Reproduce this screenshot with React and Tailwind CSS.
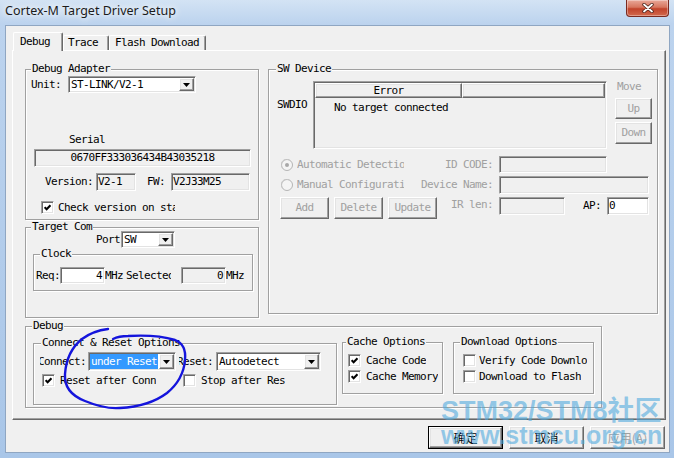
import React from 'react';

// classic 3D edges used by the dialog controls
const sunken =
  'border border-t-[#a0a0a0] border-l-[#a0a0a0] border-r-white border-b-white shadow-[inset_1px_1px_0_#696969,inset_-1px_-1px_0_#e3e3e3]';
const raised =
  'border border-t-white border-l-white border-r-[#696969] border-b-[#696969] shadow-[inset_-1px_-1px_0_#a0a0a0,inset_1px_1px_0_#e3e3e3]';

function Group({ title, className = '', labelClass = 'ml-[5px]', children }) {
  return (
    <div className={`border border-[#a0a0a0] shadow-[1px_1px_0_#fff,inset_1px_1px_0_#fff] ${className}`}>
      <div className={`-mt-[7px] w-fit whitespace-nowrap bg-[#f0f0f0] px-[1px] leading-[12px] ${labelClass}`}>{title}</div>
      {children}
    </div>
  );
}

function Field({ value = '', className = '', align = 'left', white = false }) {
  return (
    <div
      className={`${sunken} flex items-center overflow-hidden whitespace-nowrap ${white ? 'bg-white' : 'bg-[#f0f0f0]'} ${
        align === 'right' ? 'justify-end pr-[2px]' : align === 'center' ? 'justify-center' : 'pl-[1px]'
      } ${className}`}
    >
      {value}
    </div>
  );
}

function DropBtn() {
  return (
    <div className={`${raised} flex w-[15px] shrink-0 items-center justify-center bg-[#f0f0f0]`}>
      <svg width="7" height="4" viewBox="0 0 7 4">
        <path d="M0 0h7L3.5 4z" fill="#000" />
      </svg>
    </div>
  );
}

function Combo({ value, className = '', selected = false }) {
  return (
    <div className={`${sunken} flex bg-white p-[1px] ${className}`}>
      <div
        className={`flex flex-1 items-center overflow-hidden whitespace-nowrap pl-[1px] ${
          selected ? 'mr-[1px] bg-[#3399ff] text-white' : ''
        }`}
      >
        {value}
      </div>
      <DropBtn />
    </div>
  );
}

function Check({ on }) {
  return (
    <div className={`${sunken} flex h-[13px] w-[13px] shrink-0 items-center justify-center bg-white`}>
      {on && (
        <svg width="7" height="7" viewBox="0 0 7 7">
          <path d="M0.6 3.2L2.6 5.2L6.5 1.2" fill="none" stroke="#000" strokeWidth="2.1" />
        </svg>
      )}
    </div>
  );
}

function Radio({ on }) {
  return (
    <svg width="12" height="12" viewBox="0 0 12 12" className="shrink-0">
      <circle cx="6" cy="6" r="5.5" fill="#f4f4f4" stroke="#b4b4b4" />
      <path d="M1.8 9.2A4.6 4.6 0 0 1 9.2 1.8" fill="none" stroke="#c8c8c8" />
      {on && <circle cx="6" cy="6" r="2" fill="#a8a8a8" />}
    </svg>
  );
}

function CheckRow({ on, label, textClass = '', gap = 'ml-[5px]' }) {
  return (
    <div className="flex items-center">
      <Check on={on} />
      <div className={`overflow-hidden whitespace-nowrap ${gap} ${textClass}`}>{label}</div>
    </div>
  );
}

function Btn({ children, className = '', disabled = false }) {
  return (
    <div
      className={`${raised} flex items-center justify-center bg-[#f0f0f0] ${disabled ? 'text-[#a0a0a0]' : ''} ${className}`}
    >
      {children}
    </div>
  );
}

function DialogBtn({ children, def = false, disabled = false }) {
  return (
    <div
      className={`flex h-[23px] w-[75px] items-center justify-center font-['Noto_Sans_CJK_SC',sans-serif] text-[12px] tracking-normal ${
        def ? 'border border-black' : ''
      }`}
    >
      <div
        className={`${raised} flex h-full w-full items-center justify-center bg-[#f0f0f0] ${
          disabled ? 'text-[#a0a0a0]' : 'text-black'
        }`}
      >
        {children}
      </div>
    </div>
  );
}

export default function App() {
  return (
    <div className="relative h-[458px] w-[674px] overflow-hidden bg-[linear-gradient(180deg,#d3e3f4_0px,#bcd3ee_24px,#a9c6e8_100%)] font-['DejaVu_Sans_Mono',monospace] text-[11px] leading-[12px] tracking-[-0.62px] text-black">
      {/* title bar */}
      <div className="flex h-[25px]">
        <div className="pl-[5px] pt-[3px] font-['Noto_Sans',sans-serif] text-[12.5px] leading-[16px] tracking-normal text-[#1b1b1b] [text-shadow:0_0_6px_#fff,0_0_10px_#fff]">
          Cortex-M Target Driver Setup
        </div>
        <div className="ml-auto mr-[5px] flex h-[17px] w-[43px] items-center justify-center rounded-b-[4px] border border-t-0 border-[#7a2a20] bg-[linear-gradient(180deg,#e9a899_0%,#d7765f_45%,#c1432b_55%,#d2694d_100%)] shadow-[inset_0_0_0_1px_rgba(255,255,255,0.35)]">
          <svg width="12" height="10" viewBox="0 0 12 10">
            <path d="M2 1.5l8 7M10 1.5l-8 7" stroke="#4a2018" strokeWidth="3.4" strokeLinecap="round" />
            <path d="M2 1.5l8 7M10 1.5l-8 7" stroke="#fff" strokeWidth="1.8" strokeLinecap="round" />
          </svg>
        </div>
      </div>

      {/* client area */}
      <div className="ml-[5px] h-[428px] w-[665px] border border-[#8fa6c2] bg-[#f0f0f0]">
        {/* tabs */}
        <div className="ml-[7px] mt-[6px] flex h-[18px] items-end">
          <div className="relative z-10 -mb-[1px] h-[19px] w-[50px] rounded-t-[2px] border-l border-r border-t border-l-white border-r-[#696969] border-t-white bg-[#f0f0f0] pl-[6px] pt-[3px] shadow-[inset_-1px_0_0_#a0a0a0]">
            Debug
          </div>
          <div className="h-[15px] w-[46px] rounded-t-[2px] border-l border-r border-t border-l-white border-r-[#696969] border-t-white pl-[4px] pt-[1px] shadow-[inset_-1px_0_0_#a0a0a0]">
            Trace
          </div>
          <div className="h-[15px] w-[97px] rounded-t-[2px] border-l border-r border-t border-l-white border-r-[#696969] border-t-white pl-[5px] pt-[1px] shadow-[inset_-1px_0_0_#a0a0a0]">
            Flash Download
          </div>
        </div>

        {/* tab page */}
        <div className="ml-[6px] h-[370px] w-[654px] border border-b-[#696969] border-l-white border-r-[#696969] border-t-white pl-[12px] pt-[18px] shadow-[inset_-1px_-1px_0_#a0a0a0]">
          <div className="flex gap-[9px]">
            {/* left column */}
            <div className="flex w-[234px] flex-col">
              <Group title="Debug Adapter" className="h-[151px]">
                <div className="mt-[1px] flex items-center pl-[5px]">
                  <span>Unit:</span>
                  <Combo value="ST-LINK/V2-1" className="ml-[7px] h-[17px] w-[128px]" />
                </div>
                <div className="mt-[41px] pl-[43px]">Serial</div>
                <Field value="0670FF333036434B43035218" align="center" className="ml-[8px] mt-[3px] h-[18px] w-[217px]" />
                <div className="mt-[6px] flex items-center pl-[19px]">
                  <span>Version:</span>
                  <Field value="V2-1" className="ml-[3px] h-[18px] w-[40px]" />
                  <span className="ml-[11px]">FW:</span>
                  <Field value="V2J33M25" className="ml-[6px] h-[18px] w-[79px]" />
                </div>
                <div className="mt-[10px] pl-[15px]">
                  <CheckRow on label="Check version on startup" gap="ml-[4px]" textClass="w-[117px]" />
                </div>
              </Group>

              <Group title="Target Com" className="mt-[7px] h-[91px]">
                <div className="-mt-[2px] flex items-center pl-[70px]">
                  <span>Port</span>
                  <Combo value="SW" className="ml-[1px] h-[17px] w-[54px]" />
                </div>
                <Group title="Clock" labelClass="ml-[6px]" className="ml-[7px] mt-[6px] h-[37px] w-[220px]">
                  <div className="mt-[7px] flex items-center pl-[2px]">
                    <span>Req:</span>
                    <Field value="4" align="right" white className="h-[17px] w-[45px]" />
                    <span>MHz</span>
                    <span className="ml-[3px] w-[45px] overflow-hidden whitespace-nowrap">Selected:</span>
                    <Field value="0" align="right" className="ml-[10px] h-[17px] w-[45px]" />
                    <span>MHz</span>
                  </div>
                </Group>
              </Group>
            </div>

            {/* SW device */}
            <Group title="SW Device" labelClass="ml-[7px]" className="h-[245px] w-[390px]">
              <div className="mt-[6px] flex items-start pl-[8px]">
                <div className="mt-[18px] w-[36px]">SWDIO</div>
                <div className={`${sunken} flex h-[68px] w-[294px] flex-col bg-[#f0f0f0] p-[1px]`}>
                  <div className="flex h-[15px]">
                    <div className={`${raised} flex w-[147px] items-center justify-center`}>Error</div>
                    <div className={`${raised} flex-1`} />
                  </div>
                  <div className="mt-[4px] pl-[19px]">No target connected</div>
                </div>
                <div className="ml-[8px] flex w-[37px] flex-col">
                  <div className="pl-[2px] text-[#a0a0a0]">Move</div>
                  <Btn disabled className="mt-[5px] h-[21px]">Up</Btn>
                  <Btn disabled className="mt-[3px] h-[22px]">Down</Btn>
                </div>
              </div>

              <div className="mt-[7px] flex h-[17px] items-center text-[#a0a0a0]">
                <div className="flex w-[224px] items-center pl-[12px]">
                  <Radio on />
                  <span className="ml-[4px] w-[107px] overflow-hidden whitespace-nowrap">Automatic Detection</span>
                  <span className="ml-auto">ID CODE:</span>
                </div>
                <Field className="ml-[6px] h-[17px] w-[108px]" />
              </div>
              <div className="mt-[3px] flex h-[18px] items-center text-[#a0a0a0]">
                <div className="flex w-[224px] items-center pl-[12px]">
                  <Radio />
                  <span className="ml-[4px] w-[107px] overflow-hidden whitespace-nowrap">Manual Configuration</span>
                  <span className="ml-auto">Device Name:</span>
                </div>
                <Field className="ml-[6px] h-[18px] w-[150px]" />
              </div>
              <div className="mt-[3px] flex items-start">
                <div className="flex w-[224px] items-center gap-[5px] pl-[11px] text-[#a0a0a0]">
                  <Btn disabled className="h-[22px] w-[49px]">Add</Btn>
                  <Btn disabled className="h-[22px] w-[49px]">Delete</Btn>
                  <Btn disabled className="h-[22px] w-[49px]">Update</Btn>
                  <span className="ml-auto self-start pt-[2px]">IR len:</span>
                </div>
                <Field className="ml-[6px] h-[18px] w-[66px]" />
                <span className="ml-[18px] pt-[3px]">AP:</span>
                <Field value="0" white className="ml-[6px] h-[18px] w-[42px]" />
              </div>
            </Group>
          </div>

          {/* debug options */}
          <Group title="Debug" labelClass="ml-[6px]" className="mt-[8px] h-[82px] w-[577px]">
            <div className="flex items-start pl-[7px]">
              <Group title="Connect & Reset Options" labelClass="ml-[7px]" className="mt-[11px] h-[62px] w-[304px]">
                <div className="mt-[3px] flex h-[19px] items-center">
                  <div className="ml-[6px] flex w-[46px] justify-end overflow-hidden whitespace-nowrap">
                    <span className="shrink-0">Connect:</span>
                  </div>
                  <Combo value="under Reset" selected className="ml-[2px] h-[19px] w-[88px]" />
                  <div className="ml-[3px] flex w-[34px] justify-end overflow-hidden whitespace-nowrap">
                    <span className="shrink-0">Reset:</span>
                  </div>
                  <Combo value="Autodetect" className="ml-[3px] h-[19px] w-[105px]" />
                </div>
                <div className="mt-[3px] flex items-center pl-[8px]">
                  <CheckRow on label="Reset after Connect" textClass="w-[96px]" />
                  <div className="ml-[27px]">
                    <CheckRow label="Stop after Reset" textClass="w-[84px]" />
                  </div>
                </div>
              </Group>

              <Group title="Cache Options" labelClass="ml-[3px]" className="ml-[5px] mt-[10px] h-[52px] w-[101px]">
                <div className="mt-[6px] flex flex-col gap-[3px] pl-[5px]">
                  <CheckRow on label="Cache Code" />
                  <CheckRow on label="Cache Memory" />
                </div>
              </Group>

              <Group title="Download Options" labelClass="ml-[6px]" className="ml-[10px] mt-[10px] h-[52px] w-[141px]">
                <div className="mt-[6px] flex flex-col gap-[3px] pl-[9px]">
                  <CheckRow label="Verify Code Download" gap="ml-[3px]" textClass="w-[108px]" />
                  <CheckRow label="Download to Flash" gap="ml-[3px]" />
                </div>
              </Group>
            </div>
          </Group>
        </div>

        {/* dialog buttons */}
        <div className="mt-[6px] flex justify-end gap-[6px] pr-[4px]">
          <DialogBtn def>确定</DialogBtn>
          <DialogBtn>取消</DialogBtn>
          <DialogBtn disabled>应用(A)</DialogBtn>
        </div>
      </div>

      {/* pen mark around the connect option */}
      <svg className="pointer-events-none absolute left-0 top-0" width="674" height="458" viewBox="0 0 674 458">
        <path
          d="M108 329C100 330 90 333 82 339C72 347 66 360 65 374C64 388 72 396 85 401C97 406 108 409 120 408C138 407 155 402 167 393C178 384 184 372 185 360C186 350 183 343 175 340C162 336 145 335 128 336C122 336 117 337 113 339"
          fill="none"
          stroke="#1414dc"
          strokeWidth="2.4"
          strokeLinecap="round"
        />
      </svg>

      {/* site watermark */}
      <div className="pointer-events-none absolute left-[441px] top-[396px] font-['Liberation_Sans','Noto_Sans_CJK_SC',sans-serif] font-bold tracking-normal text-[rgba(80,170,222,0.6)]">
        <div className="text-[27px] leading-[30px]">STM32/STM8社区</div>
        <div className="-mt-[5px] text-[25px] leading-[28px]">www.stmcu.org.cn</div>
      </div>
    </div>
  );
}
